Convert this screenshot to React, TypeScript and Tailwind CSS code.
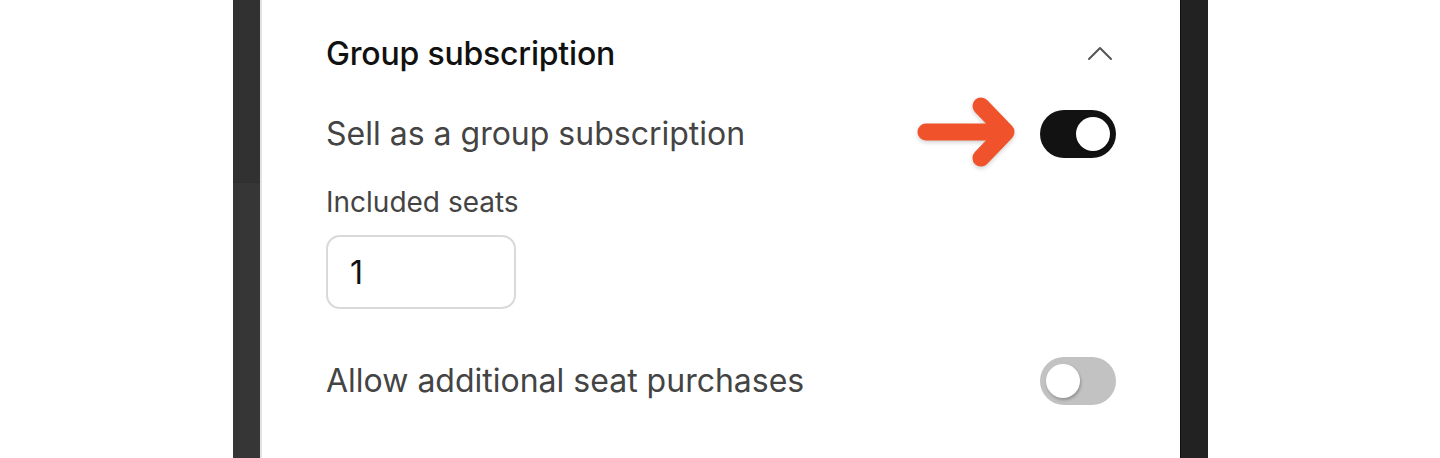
import { useState } from 'react'

function Toggle({ on, onChange }: { on: boolean; onChange: () => void }) {
  return (
    <button
      onClick={onChange}
      className={`flex h-[48px] w-[76px] shrink-0 items-center rounded-full px-[6px] ${on ? 'justify-end bg-[#121212]' : 'justify-start bg-[#c2c2c2]'}`}
    >
      <span className="block h-[34px] w-[34px] rounded-full bg-white shadow-[1px_2px_3px_rgba(0,0,0,0.25)]" />
    </button>
  )
}

function Arrow() {
  return (
    <svg width="104" height="84" viewBox="0 0 104 84" fill="none" className="shrink-0 drop-shadow-[0_2px_2px_rgba(0,0,0,0.18)]">
      <path
        d="M12 40H91M67 14L92 40L67 66"
        stroke="#f0532b"
        strokeWidth="17"
        strokeLinecap="round"
        strokeLinejoin="round"
      />
    </svg>
  )
}

export default function App() {
  const [group, setGroup] = useState(true)
  const [extra, setExtra] = useState(false)
  const [seats, setSeats] = useState('1')

  return (
    <div className="flex h-[458px] w-[1440px] overflow-hidden bg-white" style={{ fontFamily: 'Inter, "Noto Sans", sans-serif' }}>
      <div className="w-[233px] shrink-0" />
      {/* dark left rail */}
      <div className="flex w-[27px] shrink-0 flex-col">
        <div className="h-[183px] border-b border-[#2e2e2e] bg-[#313131]" />
        <div className="flex-1 bg-[#363636]" />
      </div>

      {/* panel */}
      <div className="flex w-[920px] shrink-0 flex-col border-l-2 border-[#e2e2e2] bg-white pl-[64px] pr-[64px] pt-[30px]">
        <div className="flex h-[48px] items-center justify-between">
          <h2 className="text-[32px] font-medium leading-none tracking-[-0.2px] text-[#111]">Group subscription</h2>
          <svg width="26" height="16" viewBox="0 0 26 16" fill="none" className="mr-[3px]">
            <path d="M2 13L13 2L24 13" stroke="#555" strokeWidth="2" strokeLinecap="round" strokeLinejoin="round" />
          </svg>
        </div>

        <div className="mt-[32px] flex h-[48px] items-center">
          <span className="flex-1 text-[32px] leading-none text-[#444]">Sell as a group subscription</span>
          <Arrow />
          <div className="ml-[22px]">
            <Toggle on={group} onChange={() => setGroup(!group)} />
          </div>
        </div>

        <label className="mt-[26px] block text-[28px] leading-[36px] text-[#444]">Included seats</label>
        <input
          value={seats}
          onChange={(e) => setSeats(e.target.value)}
          className="mt-[15px] h-[74px] w-[190px] rounded-[14px] border-2 border-[#d9d9d9] bg-white px-[22px] text-[32px] text-[#111] outline-none"
        />

        <div className="mt-[48px] flex h-[48px] items-center justify-between">
          <span className="text-[32px] leading-none text-[#444]">Allow additional seat purchases</span>
          <Toggle on={extra} onChange={() => setExtra(!extra)} />
        </div>
      </div>

      {/* dark right rail */}
      <div className="w-[28px] shrink-0 border-l border-[#111] bg-[#222]" />
      <div className="flex-1 bg-white" />
    </div>
  )
}
